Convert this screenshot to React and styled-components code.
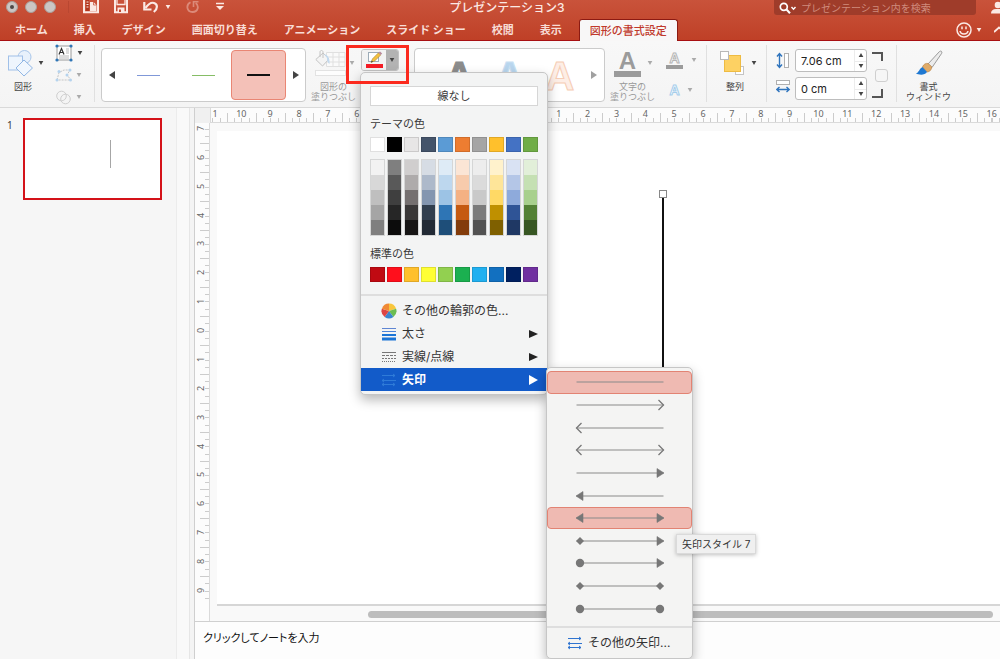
import React from "react";
import styled, { createGlobalStyle, css } from "styled-components";

const sans = `Inter, "Noto Sans CJK JP", sans-serif`;

const GlobalStyle = createGlobalStyle`
  *, *::before, *::after { box-sizing: border-box; }
  body { margin: 0; font-family: ${sans}; font-size: 11px; color: #3a3a3a; }
  button, input { font: inherit; color: inherit; }
  button { border: 0; padding: 0; background: none; cursor: default; }
  ul { list-style: none; margin: 0; padding: 0; }
  svg { display: block; flex: none; }
`;

const App = styled.div`
  display: flex;
  flex-direction: column;
  height: 100vh;
  overflow: hidden;
  background: #fff;
`;

/* ---------- title bar and tabs ---------- */

const Header = styled.header`
  flex: none;
  background: linear-gradient(#c9533b, #bf4027);
  border-bottom: 1px solid #a80f12;
  color: #fbe9e4;
`;

const TitleBar = styled.div`
  display: grid;
  grid-template-columns: 1fr auto 1fr;
  align-items: start;
  height: 15px;
  padding-left: 14px;
`;

const TitleLeft = styled.div`
  display: flex;
  align-items: center;
  height: 13px;
  margin-left: -8px;
`;

const Lights = styled.div`
  display: flex;
  gap: 7px;
  padding-right: 12px;
  margin-right: 14px;
  border-right: 1px solid #b94731;
`;

const Light = styled.button`
  display: grid;
  place-items: center;
  width: 12px;
  height: 12px;
  border-radius: 50%;
  background: #cbc6c4;
  border: 1px solid #a99f9b;
  &::after {
    content: "";
    width: 4px;
    height: 4px;
    border-radius: 50%;
    background: ${(p) => (p.$dot ? "#4f4a48" : "transparent")};
  }
`;

const QuickTools = styled.div`
  display: flex;
  align-items: center;
  gap: 15px;
`;

const ToolPair = styled.span`
  display: flex;
  align-items: center;
  gap: 6px;
`;

const Title = styled.h1`
  margin: 0;
  font-size: 12px;
  line-height: 15px;
  font-weight: 500;
  white-space: nowrap;
`;

const TitleRight = styled.div`
  display: flex;
  justify-content: flex-end;
  gap: 15px;
`;

const Search = styled.label`
  display: flex;
  align-items: center;
  gap: 4px;
  width: 202px;
  height: 15px;
  padding: 0 5px;
  border-radius: 0 0 3px 3px;
  background: #9f3c2a;
`;

const SearchInput = styled.input`
  flex: 1;
  min-width: 0;
  height: 14px;
  padding: 0;
  border: 0;
  outline: 0;
  background: none;
  font-size: 10px;
  &::placeholder { color: #cf8b7d; opacity: 1; }
`;

const TabBar = styled.nav`
  display: flex;
  align-items: stretch;
  height: 21px;
  margin-top: 4px;
  padding-left: 2px;
`;

const Tab = styled.button`
  padding: 0 13px;
  font-size: 11px;
  line-height: 20px;
  font-weight: 700;
  color: #f8ddd6;
  white-space: nowrap;
  ${(p) =>
    p.$active &&
    css`
      margin: 0 0 -1px 4px;
      padding: 0 10px;
      border: 1px solid #8c1a12;
      border-bottom: 0;
      border-radius: 3px 3px 0 0;
      background: #f8f7f7;
      color: #c0392b;
      font-weight: 500;
    `}
`;

const TabTools = styled.div`
  display: flex;
  align-items: center;
  gap: 4px;
  margin-left: auto;
`;

/* ---------- ribbon ---------- */

const Ribbon = styled.section`
  position: relative;
  z-index: 2;
  flex: none;
  display: flex;
  gap: 6px;
  height: 67px;
  padding: 7px 0 5px 8px;
  background: linear-gradient(#f8f8f8, #f4f4f4);
  border-bottom: 1px solid #d9d9d9;
`;

const Divider = styled.span`
  flex: none;
  width: 1px;
  margin: -3px 0 0;
  background: #e0e0e0;
`;

const BigTool = styled.button`
  flex: none;
  display: flex;
  flex-direction: column;
  align-items: ${(p) => (p.$center ? "center" : "flex-start")};
  width: ${(p) => p.$w}px;
  padding-left: ${(p) => p.$pad || 0}px;
`;

const IconRow = styled.span`
  display: flex;
  align-items: center;
  gap: 3px;
  height: 30px;
  padding-left: ${(p) => p.$pad || 0}px;
`;

const ToolLabel = styled.span`
  display: flex;
  flex-direction: column;
  align-items: center;
  width: ${(p) => p.$w}px;
  padding-top: 4px;
  font-size: 9px;
  line-height: 10px;
  white-space: nowrap;
  color: ${(p) => (p.$dim ? "#999" : "#444")};
`;

const ToolColumn = styled.div`
  flex: none;
  display: flex;
  flex-direction: column;
  justify-content: ${(p) => (p.$spread ? "flex-start" : "space-between")};
  gap: ${(p) => (p.$spread ? 5 : 0)}px;
  width: ${(p) => p.$w}px;
  padding-left: ${(p) => p.$pad || 0}px;
  margin: -4px 0;
`;

const SmallTool = styled.button`
  display: flex;
  align-items: center;
  gap: 4px;
  height: ${(p) => p.$h || 18}px;
`;

const Gallery = styled.div`
  flex: none;
  display: flex;
  width: ${(p) => p.$w}px;
  height: 54px;
  border: 1px solid #cbcbcb;
  border-radius: 4px;
  background: #fff;
`;

const GalleryArrow = styled.button`
  display: grid;
  place-items: center;
  width: 19px;
`;

const GalleryCell = styled.button`
  flex: 1;
  display: grid;
  place-items: center;
  border-radius: 4px;
  border: 1px solid ${(p) => (p.$active ? "#e98674" : "transparent")};
  background: ${(p) => (p.$active ? "#f4c1b8" : "none")};
  margin: 1px 0;
`;

const Stroke = styled.span`
  width: 23px;
  border-top: ${(p) => (p.$bold ? 2 : 1)}px solid ${(p) => p.$color};
`;

const ArtLetter = styled.span`
  font: bold 40px/50px "Liberation Sans", sans-serif;
  color: ${(p) => p.$fill};
  -webkit-text-stroke: 1px ${(p) => p.$line};
`;

const TextGlyph = styled.span`
  display: flex;
  flex-direction: column;
  align-items: center;
  width: ${(p) => p.$w}px;
  font: bold ${(p) => p.$size}px/${(p) => p.$lh}px "Liberation Sans", sans-serif;
  color: ${(p) => p.$fill};
  -webkit-text-stroke: ${(p) => (p.$line ? "1px" : "0")} ${(p) => p.$line};
  &::after {
    content: "";
    width: 100%;
    height: ${(p) => p.$bar || 0}px;
    background: #9b9b9b;
  }
`;

const OutlineTool = styled.div`
  position: relative;
  flex: none;
  width: 47px;
`;

const SplitButton = styled.div`
  display: flex;
  width: 38px;
  height: 22px;
  margin-top: 1px;
  border: 1px solid #c2c2c2;
  border-radius: 3px;
  overflow: hidden;
`;

const SplitMain = styled.button`
  flex: 1;
  display: grid;
  place-items: center;
  background: #f3f3f3;
`;

const SplitCaret = styled.button`
  display: grid;
  place-items: center;
  width: 12px;
  background: #b3b3b3;
`;

const Callout = styled.div`
  position: absolute;
  z-index: 5;
  left: -15px;
  top: -3px;
  width: 63px;
  height: 39px;
  border: 3px solid #fb2a1e;
  pointer-events: none;
`;

const SizeGroup = styled.div`
  flex: none;
  display: grid;
  grid-template-columns: 14px 72px 16px;
  column-gap: 5px;
  width: 117px;
  padding-left: 3px;
`;

const SizeFields = styled.div`
  display: flex;
  flex-direction: column;
  gap: 5px;
  padding-top: 1px;
`;

const SizeIcons = styled.div`
  display: grid;
  grid-template-rows: 24px 30px;
  align-items: center;
`;

const NumberBox = styled.div`
  display: flex;
  height: 23px;
  border: 1px solid #bdbdbd;
  border-radius: 3px;
  background: #fff;
`;

const NumberInput = styled.input`
  flex: 1;
  min-width: 0;
  padding: 0 0 0 5px;
  border: 0;
  outline: 0;
  background: none;
  font-size: 11px;
  color: #222;
`;

const Stepper = styled.div`
  display: grid;
  grid-template-rows: 1fr 1fr;
  width: 12px;
  border-left: 1px solid #ececec;
`;

const StepButton = styled.button`
  display: grid;
  place-items: center;
  & + & { border-top: 1px solid #ececec; }
`;

const AspectLock = styled.div`
  display: flex;
  flex-direction: column;
  align-items: flex-start;
  justify-content: space-between;
  height: 46px;
  margin-top: 4px;
`;

const LockBox = styled.input`
  appearance: none;
  align-self: flex-end;
  width: 13px;
  height: 13px;
  margin: 0;
  border: 1px solid #cfcfcf;
  border-radius: 3px;
  background: #f6f6f6;
`;

/* ---------- outline menu ---------- */

const Menu = styled.div`
  position: absolute;
  z-index: 3;
  left: -1px;
  top: 24px;
  width: 188px;
  padding-bottom: 3px;
  border: 1px solid #c6c6c6;
  border-radius: 5px;
  background: #f3f4f4;
  box-shadow: 0 5px 12px rgba(0, 0, 0, 0.28);
`;

const Palette = styled.div`
  display: flex;
  flex-direction: column;
  padding: 13px 9px 12px;
  border-bottom: 2px solid #dedede;
`;

const NoLine = styled.button`
  height: 20px;
  border: 1px solid #d6d6d6;
  background: #fff;
  line-height: 17px;
`;

const PaletteTitle = styled.h2`
  margin: 0;
  padding: 10px 0 5px;
  font-size: 11px;
  line-height: 16px;
  font-weight: 400;
`;

const SwatchRow = styled.div`
  display: flex;
  gap: 2px;
`;

const Swatch = styled.button`
  width: 15px;
  height: 15px;
  border: 1px solid rgba(0, 0, 0, 0.12);
  background: ${(p) => p.$color};
`;

const Ramp = styled.div`
  display: flex;
  flex-direction: column;
  width: 15px;
  margin-top: 7px;
  border: 1px solid rgba(0, 0, 0, 0.12);
`;

const Shade = styled.button`
  height: 15px;
  background: ${(p) => p.$color};
`;

const MenuList = styled.ul`
  padding-top: 3px;
`;

const MenuItem = styled.li`
  position: relative;
  background: ${(p) => (p.$active ? "#125bc9" : "none")};
  color: ${(p) => (p.$active ? "#fff" : "#333")};
`;

const MenuButton = styled.button`
  display: flex;
  align-items: center;
  gap: 5px;
  width: 100%;
  height: ${(p) => p.$h || 23}px;
  padding: 0 9px 0 20px;
  font-size: 12px;
  font-weight: ${(p) => (p.$strong ? 700 : 400)};
  white-space: nowrap;
`;

const MenuText = styled.span`
  flex: 1;
  text-align: left;
  line-height: 18px;
`;

const SubMenu = styled.div`
  position: absolute;
  left: calc(100% - 1px);
  top: -1px;
  width: 147px;
  padding-top: 3px;
  border: 1px solid #c6c6c6;
  border-radius: 5px;
  background: #f4f4f3;
  color: #333;
  box-shadow: 0 5px 12px rgba(0, 0, 0, 0.28);
`;

const ArrowList = styled.ul`
  display: flex;
  flex-direction: column;
  height: 249px;
  margin-bottom: 6px;
`;

const ArrowItem = styled.li`
  position: relative;
  flex: 1;
  display: flex;
`;

const ArrowButton = styled.button`
  flex: 1;
  display: grid;
  place-items: center;
  border: 1px solid ${(p) => (p.$active ? "#e28373" : "transparent")};
  border-radius: 4px;
  background: ${(p) => (p.$active ? "#efbab2" : "none")};
`;

const SubFooter = styled.div`
  border-top: 2px solid #dedede;
`;

const Tooltip = styled.span`
  position: absolute;
  left: 129px;
  top: 27px;
  padding: 0 5px;
  border: 1px solid #dadada;
  background: #f0f0f0;
  box-shadow: 0 1px 4px rgba(0, 0, 0, 0.25);
  font-size: 10px;
  line-height: 18px;
  white-space: nowrap;
`;

/* ---------- work area ---------- */

const Work = styled.div`
  flex: 1;
  min-height: 0;
  display: flex;
`;

const Sidebar = styled.aside`
  flex: none;
  display: flex;
  align-items: flex-start;
  gap: 10px;
  width: 176px;
  padding: 10px 7px;
  background: #f6f6f6;
`;

const SlideNumber = styled.span`
  width: 6px;
  font: 10px/14px "Noto Sans", sans-serif;
`;

const Thumb = styled.button`
  position: relative;
  width: 139px;
  height: 82px;
  border: 2px solid #d41219;
  background: #fff;
`;

const ThumbLine = styled.span`
  position: absolute;
  left: 85px;
  top: 20px;
  height: 28px;
  border-left: 1px solid #a6a6a6;
`;

const Gutter = styled.div`
  flex: none;
  width: 19px;
  background: #f9f9f9;
  border-left: 1px solid #ececec;
  border-right: 1px solid #cfcfcf;
  box-shadow: inset -4px 0 0 #f4f4f4, inset -5px 0 0 #e6e6e6;
`;

const Main = styled.main`
  flex: 1;
  min-width: 0;
  display: flex;
  flex-direction: column;
`;

const Stage = styled.div`
  flex: 1;
  min-height: 0;
  display: grid;
  grid-template: 15px 1fr / 15px 1fr;
`;

const Corner = styled.div`
  background: #f0f0f0;
`;

const RulerX = styled.div`
  display: flex;
  min-width: 0;
  overflow: hidden;
  background: #fcfcfc;
  border-bottom: 1px solid #dadada;
  border-left: 1px solid #dadada;
`;

const TrackX = styled.div`
  flex: 1;
  display: flex;
  margin: 0 -6px 0 -13px;
`;

const MarkX = styled.span`
  flex: 1;
  text-align: center;
  font: 9px/11px "Noto Sans", sans-serif;
  color: #666;
  background:
    linear-gradient(#ccc, #ccc) left bottom / 1px 9px no-repeat,
    repeating-linear-gradient(to right, #ccc 0 1px, transparent 1px 25%) left bottom / 100% 4px no-repeat;
`;

const RulerY = styled.div`
  display: flex;
  min-height: 0;
  overflow: hidden;
  background: #fcfcfc;
  border-right: 1px solid #dadada;
`;

const TrackY = styled.div`
  flex: 1;
  display: flex;
  flex-direction: column;
  margin: -9px 0 16px;
`;

const MarkY = styled.span`
  flex: 1;
  display: flex;
  align-items: center;
  font: 9px/11px "Noto Sans", sans-serif;
  color: #666;
  background:
    linear-gradient(#ccc, #ccc) right top / 9px 1px no-repeat,
    repeating-linear-gradient(to bottom, #ccc 0 1px, transparent 1px 25%) right top / 4px 100% no-repeat;
  & > span { transform: rotate(-90deg); width: 11px; text-align: center; }
`;

const Desk = styled.div`
  min-width: 0;
  display: flex;
  flex-direction: column;
  padding: 8px 0 0 7px;
  background: #f9f9f9;
`;

const Slide = styled.div`
  position: relative;
  flex: 1;
  background: #fff;
  border-bottom: 2px solid #d6d6d6;
`;

const DrawnLine = styled.span`
  position: absolute;
  left: 445px;
  top: 63px;
  height: 204px;
  border-left: 2px solid #111;
`;

const Handle = styled.span`
  position: absolute;
  left: 442px;
  top: 59px;
  width: 8px;
  height: 8px;
  border: 1px solid #888;
  background: #fff;
`;

const ScrollTrack = styled.div`
  height: 15px;
  padding: 5px 7px 0 151px;
`;

const ScrollThumb = styled.div`
  height: 7px;
  border-radius: 4px;
  background: #bdbdbd;
`;

const Notes = styled.div`
  flex: none;
  height: 38px;
  padding: 8px;
  border-top: 1px solid #d0d0d0;
  background: #fdfdfd;
  font-size: 11px;
  line-height: 16px;
  font-feature-settings: "palt";
  color: #111;
`;

/* ---------- drawings ---------- */

const Caret = ({ color = "#444", up }) => (
  <svg width="6" height="4" viewBox="0 0 6 4" aria-hidden="true">
    <path d={up ? "M0.7 4h4.6L3 0z" : "M0.7 0h4.6L3 4z"} fill={color} />
  </svg>
);

const Triangle = ({ left, color = "#222", w = 6, h = 8 }) => (
  <svg width={w} height={h} viewBox="0 0 6 8" preserveAspectRatio="none" aria-hidden="true">
    <path d={left ? "M6 0v8L0 4z" : "M0 0v8l6-4z"} fill={color} />
  </svg>
);

const PanelIcon = () => (
  <svg width="16" height="14" viewBox="0 0 16 14">
    <path d="M1 0v12.2h14V0" fill="none" stroke="#fbe9e4" strokeWidth="2" />
    <rect x="3" y="0" width="3" height="11" fill="#b0371f" />
    <path d="M3.500 2h2M3.500 4.500h2M3.500 7h2" stroke="#fbe9e4" strokeWidth="1" />
    <path d="M7 2h3.500l3 3V11H7z" fill="#fbe9e4" />
    <path d="M10.500 2v3h3" fill="none" stroke="#c54b33" strokeWidth=".7" />
  </svg>
);

const SaveIcon = () => (
  <svg width="14" height="14" viewBox="0 0 14 14">
    <path d="M1 0v12.200h12V0" fill="none" stroke="#fbe9e4" strokeWidth="2" />
    <path d="M3 0v4.500h8V0" fill="none" stroke="#fbe9e4" strokeWidth="1.300" />
    <path d="M3.500 7.500h7V12h-7z" fill="#fbe9e4" />
    <path d="M5 9.500h2V12H5z" fill="#c54b33" />
  </svg>
);

const UndoIcon = () => (
  <svg width="16" height="13" viewBox="0 0 16 13">
    <path d="M1.300 2v7.500H8.500" fill="none" stroke="#fbe9e4" strokeWidth="2.200" />
    <path d="M2.500 8C5 4.500 8 2 11 3c3.800 1.300 4 5.500-.2 9" fill="none" stroke="#fbe9e4" strokeWidth="2.200" />
  </svg>
);

const RedoIcon = () => (
  <svg width="14" height="13" viewBox="0 0 14 13">
    <path d="M4.500 2.200C-.5 5 .8 12 6.500 12c5.500 0 7-6 3.200-9" fill="none" stroke="#dc8a79" strokeWidth="1.800" />
    <path d="M7.500 7V1.800H12.500" fill="none" stroke="#dc8a79" strokeWidth="1.600" />
  </svg>
);

const MoreIcon = () => (
  <svg width="10" height="9" viewBox="0 0 10 9">
    <path d="M1 1.500h8" stroke="#fbe9e4" strokeWidth="1.500" />
    <path d="M1 4h8L5 8z" fill="#fbe9e4" />
  </svg>
);

const SearchIcon = () => (
  <svg width="18" height="12" viewBox="0 0 18 12">
    <circle cx="4.800" cy="4.800" r="3.500" fill="none" stroke="#fff" strokeWidth="1.700" />
    <path d="M7.500 7.500l3.500 3.700" stroke="#fff" strokeWidth="2" />
    <path d="M12.500 5l2 2.200 2-2.200" fill="none" stroke="#fff" strokeWidth="1.400" />
  </svg>
);

const PersonIcon = () => (
  <svg width="9" height="14" viewBox="0 0 9 14">
    <circle cx="7" cy="4" r="3.300" fill="#fbe9e4" />
    <path d="M0 12.500c0-3 2-4.500 5-4.500h4v4.500z" fill="#fbe9e4" />
  </svg>
);

const SmileIcon = () => (
  <svg width="16" height="16" viewBox="0 0 16 16">
    <circle cx="8" cy="8" r="7" fill="none" stroke="#fbe9e4" strokeWidth="1.500" />
    <path d="M6 4.500v2.800M10 4.500v2.800" stroke="#fbe9e4" strokeWidth="1.500" />
    <path d="M4 9c.6 4 7.400 4 8 0" fill="none" stroke="#fbe9e4" strokeWidth="1.500" />
  </svg>
);

const ChevronIcon = () => (
  <svg width="6" height="8" viewBox="0 0 6 8">
    <path d="M0 6l5-4.500 5 4.500" fill="none" stroke="#fbe9e4" strokeWidth="1.800" />
  </svg>
);

const ShapesIcon = () => (
  <svg width="27" height="28" viewBox="0 0 27 28">
    <circle cx="16.500" cy="8" r="6.500" fill="#e8f1fb" stroke="#a8c6ea" />
    <rect x="0.500" y="7" width="14" height="14" fill="#eef5fd" stroke="#a0c0e8" />
    <path d="M16 11l8.500 8-8.500 8-8-8z" fill="#f1f7fe" stroke="#90b6e4" />
  </svg>
);

const TextBoxIcon = () => (
  <svg width="18" height="18" viewBox="0 0 18 18">
    <rect x="2" y="2" width="14" height="14" fill="#fff" stroke="#9a9a9a" />
    <path d="M4 10.500L6.500 4.500 9 10.500M5 8.500h3" fill="none" stroke="#333" strokeWidth="1.200" />
    <path d="M11 5h3M11 7h3M11 9h3M4 12h10M4 14h10" stroke="#aaa" strokeWidth=".8" />
    <g fill="#2e75b6">
      <circle cx="2" cy="2" r="1.600" />
      <circle cx="16" cy="2" r="1.600" />
      <circle cx="2" cy="16" r="1.600" />
      <circle cx="16" cy="16" r="1.600" />
    </g>
  </svg>
);

const EditPointsIcon = () => (
  <svg width="17" height="14" viewBox="0 0 17 14">
    <path d="M2 12L4 4.500 9 2h6l-3 5 4 5z" fill="none" stroke="#c5c5c5" strokeDasharray="2 1" />
    <g fill="#b5d3ee">
      <circle cx="2" cy="12" r="1.500" />
      <circle cx="4" cy="3.500" r="1.500" />
      <circle cx="15" cy="2" r="1.500" />
      <circle cx="12" cy="7" r="1.500" />
      <circle cx="15.500" cy="12" r="1.500" />
    </g>
  </svg>
);

const MergeIcon = () => (
  <svg width="17" height="15" viewBox="0 0 17 15">
    <circle cx="6.500" cy="6" r="4.800" fill="none" stroke="#cfcfcf" />
    <circle cx="10.500" cy="9" r="4.800" fill="none" stroke="#cfcfcf" />
  </svg>
);

const BucketIcon = () => (
  <svg width="31" height="27" viewBox="0 0 31 27">
    <path d="M11.500 2.500H30v14H11.500zM18 2.500v14M24 2.500v14M11.500 7h18.500M11.500 12h18.500" fill="#fafafa" stroke="#e0e0e0" />
    <path d="M8 3l6 6-6.500 7L0.800 9.500z" fill="#f4f4f4" stroke="#c4c4c4" />
    <path d="M5 7V2c0-2 3-2 3 0v6" fill="none" stroke="#c4c4c4" />
    <path d="M9 4c4 1 6 4 5.500 10-1.500-1-3-4-2.500-6" fill="#c3d9ee" />
    <rect x="0.500" y="20.500" width="30" height="5" fill="#fdfdfd" stroke="#e2e2e2" />
  </svg>
);

const PencilIcon = () => (
  <svg width="20" height="18" viewBox="0 0 20 18">
    <rect x="4.500" y="1.500" width="10" height="9" fill="#fff" stroke="#9dacb8" />
    <path d="M7 11.500l1.500-3.700 6-6 2.200 2.200-6 6z" fill="#f3c13f" stroke="#a8843a" strokeWidth=".6" />
    <path d="M14.500 1.800L16 .5l2.200 2-1.500 1.500z" fill="#b98a9c" />
    <path d="M7 11.500l.8-1.900 1.200 1.100z" fill="#333" />
    <rect x="2" y="13" width="17" height="4" fill="#f51c25" />
  </svg>
);

const AlignIcon = () => (
  <svg width="25" height="25" viewBox="0 0 25 25">
    <rect x="15.500" y="15.500" width="8" height="8" fill="#fff" stroke="#c4c4c4" />
    <rect x="4.500" y="4.500" width="16" height="16" fill="#fdd163" stroke="#eebb42" />
    <rect x="0.500" y="0.500" width="8" height="8" fill="#fff" stroke="#b9b9b9" />
  </svg>
);

const HeightIcon = () => (
  <svg width="14" height="17" viewBox="0 0 14 17">
    <path d="M3.500 2v13M1 4.500L3.500 1.500 6 4.500M1 12.500l2.500 3 2.500-3" fill="none" stroke="#2f74bd" strokeWidth="1.400" />
    <rect x="8.500" y="1.500" width="4" height="14" fill="#fff" stroke="#b0b0b0" />
  </svg>
);

const WidthIcon = () => (
  <svg width="15" height="14" viewBox="0 0 15 14">
    <rect x="0.500" y="0.500" width="13" height="4" fill="#fff" stroke="#b0b0b0" />
    <path d="M1 9.500h12M3.500 7L.8 9.500l2.700 2.500M10.500 7l2.700 2.500-2.700 2.500" fill="none" stroke="#2f74bd" strokeWidth="1.400" />
  </svg>
);

const Bracket = ({ bottom }) => (
  <svg width="11" height="9" viewBox="0 0 11 9">
    <path d={bottom ? "M0 8h10V0" : "M0 1h10v8"} fill="none" stroke="#555" strokeWidth="2" />
  </svg>
);

const BrushIcon = () => (
  <svg width="28" height="26" viewBox="0 0 28 26">
    <path d="M13 14L24.500 1.500c1.500-1.200 3 .2 2.200 1.800L17 17.500z" fill="#ececec" stroke="#9b9b9b" />
    <path d="M7.500 17c1-3 3.500-4 5.700-3.500l3.500 3.300c0 3-2 5-4.700 5.200z" fill="#e0ab68" stroke="#b98346" strokeWidth=".7" />
    <path d="M0.800 23.500c3-.5 3.500-5 6.700-6.500l4.500 5c-2 3.500-8 3-11.200 1.500z" fill="#1f78d1" />
  </svg>
);

const ColorWheel = () => (
  <svg width="16" height="16" viewBox="0 0 16 16">
    <path d="M8 8V.5A7.500 7.500 0 0 1 15.100 5.700z" fill="#f8c63c" />
    <path d="M8 8l7.100-2.300A7.500 7.500 0 0 1 12.400 14z" fill="#6bbd52" />
    <path d="M8 8l4.400 6A7.500 7.500 0 0 1 3.600 14z" fill="#3b86cf" />
    <path d="M8 8l-4.400 6A7.500 7.500 0 0 1 .9 5.700z" fill="#de4444" />
    <path d="M8 8L.9 5.700A7.500 7.500 0 0 1 8 .5z" fill="#f08a35" />
  </svg>
);

const WeightIcon = () => (
  <svg width="16" height="14" viewBox="0 0 16 14">
    <path d="M1 1.500h14" stroke="#5f86d3" />
    <path d="M1 4.500h14" stroke="#4a83d8" />
    <path d="M1 8h14" stroke="#1b75d6" strokeWidth="2" />
    <path d="M1 12h14" stroke="#1b75d6" strokeWidth="3" />
  </svg>
);

const DashIcon = () => (
  <svg width="16" height="12" viewBox="0 0 16 12">
    <g stroke="#777">
      <path d="M1 1.500h14" />
      <path d="M1 4.500h14" strokeDasharray="3 1" />
      <path d="M1 7.500h14" strokeDasharray="2 1" />
      <path d="M1 10.500h14" strokeDasharray="1 1" />
    </g>
  </svg>
);

const ArrowsIcon = ({ color }) => (
  <svg width="16" height="14" viewBox="0 0 16 14">
    <g stroke={color} fill="none">
      <path d="M1 2.500h13M1 7.500h14M1 11.500h13" />
      <path d="M12 1l2 1.500-2 1.500M3 6L1 7.500 3 9M3 10l-2 1.500L3 13M12 10l2 1.500-2 1.500" />
    </g>
  </svg>
);

const End = ({ kind, right }) => {
  const flip = right ? "translate(90 0) scale(-1 1)" : undefined;
  return (
    <g transform={flip}>
      {kind === "open" && <path d="M6.500 2L1.500 7l5 5" fill="none" stroke="#777" strokeWidth="1.300" />}
      {kind === "solid" && <path d="M1 7l7-4.500v9z" fill="#777" stroke="#777" strokeWidth=".6" />}
      {kind === "diamond" && <path d="M5 3l4 4-4 4-4-4z" fill="#777" />}
      {kind === "dot" && <circle cx="5" cy="7" r="4.200" fill="#777" />}
    </g>
  );
};

const ArrowSample = ({ start, end }) => (
  <svg width="90" height="14" viewBox="0 0 90 14">
    <path d="M1.500 7h87" stroke="#8a8a8a" strokeWidth="1.200" />
    <End kind={start} />
    <End kind={end} right />
  </svg>
);

/* ---------- data ---------- */

const tabs = ["ホーム", "挿入", "デザイン", "画面切り替え", "アニメーション", "スライド ショー", "校閲", "表示", "図形の書式設定"];

const themeColors = ["#ffffff", "#000000", "#e7e6e6", "#44546a", "#5b9bd5", "#ed7d31", "#a5a5a5", "#ffc02c", "#4472c4", "#70ad47"];

const ramps = [
  ["#f2f2f2", "#d8d8d8", "#bfbfbf", "#a5a5a5", "#7f7f7f"],
  ["#7f7f7f", "#595959", "#3f3f3f", "#262626", "#0c0c0c"],
  ["#d0cece", "#aeabab", "#757070", "#3a3838", "#171616"],
  ["#d6dce4", "#adb9ca", "#8496b0", "#323f4f", "#222a35"],
  ["#deebf6", "#bdd7ee", "#9cc3e5", "#2e75b5", "#1e4e79"],
  ["#fbe5d5", "#f7cbac", "#f4b183", "#c55a11", "#833c0b"],
  ["#ededed", "#dbdbdb", "#c9c9c9", "#7b7b7b", "#525252"],
  ["#fff2cc", "#fee599", "#ffd965", "#bf9000", "#7f6000"],
  ["#d9e2f3", "#b4c6e7", "#8eaadb", "#2f5496", "#1f3864"],
  ["#e2efd9", "#c5e0b3", "#a8d08d", "#538135", "#375623"],
];

const standardColors = ["#c00a12", "#ff0f1c", "#ffc02c", "#ffff35", "#92d050", "#1bb050", "#20b0f0", "#1270c0", "#002060", "#7030a0"];

const arrowStyles = [
  { start: null, end: null, active: true },
  { start: null, end: "open" },
  { start: "open", end: null },
  { start: "open", end: "open" },
  { start: null, end: "solid" },
  { start: "solid", end: null },
  { start: "solid", end: "solid", active: true, tip: "矢印スタイル 7" },
  { start: "diamond", end: "solid" },
  { start: "dot", end: "solid" },
  { start: "diamond", end: "diamond" },
  { start: "dot", end: "dot" },
];

const range = (from, to) =>
  Array.from({ length: Math.abs(to - from) + 1 }, (_, i) => Math.abs(from + i));

const marksX = range(-11, 16);
const marksY = range(-7, 9);

/* ---------- parts ---------- */

const SizeField = ({ label, value }) => (
  <NumberBox>
    <NumberInput aria-label={label} defaultValue={value} />
    <Stepper>
      <StepButton aria-label={`${label} +`}><Caret up /></StepButton>
      <StepButton aria-label={`${label} -`}><Caret /></StepButton>
    </Stepper>
  </NumberBox>
);

const ArrowMenu = () => (
  <SubMenu>
    <ArrowList>
      {arrowStyles.map((s, i) => (
        <ArrowItem key={i}>
          <ArrowButton $active={s.active} aria-label={`矢印スタイル ${i + 1}`}>
            <ArrowSample start={s.start} end={s.end} />
          </ArrowButton>
          {s.tip && <Tooltip role="tooltip">{s.tip}</Tooltip>}
        </ArrowItem>
      ))}
    </ArrowList>
    <SubFooter>
      <MenuButton $h={30}>
        <ArrowsIcon color="#2f74d0" />
        <MenuText>その他の矢印...</MenuText>
      </MenuButton>
    </SubFooter>
  </SubMenu>
);

const OutlineMenu = () => (
  <Menu>
    <Palette>
      <NoLine>線なし</NoLine>
      <PaletteTitle>テーマの色</PaletteTitle>
      <SwatchRow>
        {themeColors.map((c) => <Swatch key={c} $color={c} aria-label={c} />)}
      </SwatchRow>
      <SwatchRow>
        {ramps.map((ramp, i) => (
          <Ramp key={i}>
            {ramp.map((c) => <Shade key={c} $color={c} aria-label={c} />)}
          </Ramp>
        ))}
      </SwatchRow>
      <PaletteTitle>標準の色</PaletteTitle>
      <SwatchRow>
        {standardColors.map((c) => <Swatch key={c} $color={c} aria-label={c} />)}
      </SwatchRow>
    </Palette>
    <MenuList>
      <MenuItem>
        <MenuButton><ColorWheel /><MenuText>その他の輪郭の色...</MenuText></MenuButton>
      </MenuItem>
      <MenuItem>
        <MenuButton><WeightIcon /><MenuText>太さ</MenuText><Triangle w={9} h={8} /></MenuButton>
      </MenuItem>
      <MenuItem>
        <MenuButton><DashIcon /><MenuText>実線/点線</MenuText><Triangle w={9} h={8} /></MenuButton>
      </MenuItem>
      <MenuItem $active>
        <MenuButton $strong><ArrowsIcon color="#2f7bd8" /><MenuText>矢印</MenuText><Triangle w={9} h={10} color="#fff" /></MenuButton>
        <ArrowMenu />
      </MenuItem>
    </MenuList>
  </Menu>
);

export default function PresentationWindow() {
  return (
    <App>
      <GlobalStyle />
      <Header>
        <TitleBar>
          <TitleLeft>
            <Lights>
              <Light $dot aria-label="閉じる" />
              <Light aria-label="しまう" />
              <Light aria-label="拡大" />
            </Lights>
            <QuickTools>
              <button aria-label="表示"><PanelIcon /></button>
              <button aria-label="保存"><SaveIcon /></button>
              <ToolPair>
                <button aria-label="元に戻す"><UndoIcon /></button>
                <Caret color="#fbe9e4" />
              </ToolPair>
              <button aria-label="やり直し"><RedoIcon /></button>
              <button aria-label="カスタマイズ"><MoreIcon /></button>
            </QuickTools>
          </TitleLeft>
          <Title>プレゼンテーション3</Title>
          <TitleRight>
            <Search>
              <SearchIcon />
              <SearchInput aria-label="検索" placeholder="プレゼンテーション内を検索" />
            </Search>
            <button aria-label="共有"><PersonIcon /></button>
          </TitleRight>
        </TitleBar>
        <TabBar>
          {tabs.map((t, i) => (
            <Tab key={t} $active={i === tabs.length - 1}>{t}</Tab>
          ))}
          <TabTools>
            <button aria-label="フィードバック"><SmileIcon /></button>
            <Caret color="#fbe9e4" />
            <span />
            <span />
            <button aria-label="リボンを隠す"><ChevronIcon /></button>
          </TabTools>
        </TabBar>
      </Header>

      <Ribbon>
        <BigTool $w={41}>
          <IconRow><ShapesIcon /><Caret /></IconRow>
          <ToolLabel $w={30}>図形</ToolLabel>
        </BigTool>
        <ToolColumn $w={33}>
          <SmallTool aria-label="テキスト ボックス"><TextBoxIcon /><Caret /></SmallTool>
          <SmallTool aria-label="頂点の編集"><EditPointsIcon /><Caret color="#aaa" /></SmallTool>
          <SmallTool aria-label="図形の結合"><MergeIcon /><Caret color="#aaa" /></SmallTool>
        </ToolColumn>
        <Divider />
        <Gallery $w={205}>
          <GalleryArrow aria-label="前へ"><Triangle left color="#444" /></GalleryArrow>
          <GalleryCell aria-label="青の線"><Stroke $color="#8098d8" /></GalleryCell>
          <GalleryCell aria-label="緑の線"><Stroke $color="#86bd66" /></GalleryCell>
          <GalleryCell $active aria-label="黒の線"><Stroke $bold $color="#111" /></GalleryCell>
          <GalleryArrow aria-label="次へ"><Triangle color="#444" /></GalleryArrow>
        </Gallery>
        <BigTool $w={43}>
          <IconRow $pad={3}><BucketIcon /><Caret color="#aaa" /></IconRow>
          <ToolLabel $w={43} $dim><span>図形の</span><span>塗りつぶし</span></ToolLabel>
        </BigTool>
        <OutlineTool>
          <SplitButton>
            <SplitMain aria-label="図形の枠線"><PencilIcon /></SplitMain>
            <SplitCaret aria-label="図形の枠線の色"><Caret /></SplitCaret>
          </SplitButton>
          <OutlineMenu />
          <Callout />
        </OutlineTool>
        <Gallery $w={191}>
          <GalleryArrow aria-label="前へ" />
          <GalleryCell><ArtLetter $fill="#8c8c8c" $line="#8c8c8c">A</ArtLetter></GalleryCell>
          <GalleryCell><ArtLetter $fill="#b9d6ee" $line="#c9e0f3">A</ArtLetter></GalleryCell>
          <GalleryCell><ArtLetter $fill="#fdeee6" $line="#f6cdb5">A</ArtLetter></GalleryCell>
          <GalleryArrow aria-label="次へ"><Triangle color="#a0a0a0" /></GalleryArrow>
        </Gallery>
        <BigTool $w={43}>
          <IconRow $pad={3}>
            <TextGlyph $w={27} $size={24} $lh={21} $bar={6} $fill="#9b9b9b">A</TextGlyph>
            <span />
            <Caret color="#aaa" />
          </IconRow>
          <ToolLabel $w={43} $dim><span>文字の</span><span>塗りつぶし</span></ToolLabel>
        </BigTool>
        <ToolColumn $w={40} $pad={6} $spread>
          <SmallTool $h={32}>
            <TextGlyph $w={17} $size={14} $lh={13} $bar={4} $fill="#fff" $line="#b5b5b5">A</TextGlyph>
            <span />
            <Caret color="#aaa" />
          </SmallTool>
          <SmallTool>
            <TextGlyph $w={17} $size={14} $lh={14} $fill="#fff" $line="#a5cdeb">A</TextGlyph>
            <Caret color="#aaa" />
          </SmallTool>
        </ToolColumn>
        <Divider />
        <BigTool $w={47} $pad={7}>
          <IconRow><AlignIcon /><span /><Caret /></IconRow>
          <ToolLabel $w={30}>整列</ToolLabel>
        </BigTool>
        <Divider />
        <SizeGroup>
          <SizeIcons><HeightIcon /><WidthIcon /></SizeIcons>
          <SizeFields>
            <SizeField label="高さ" value="7.06 cm" />
            <SizeField label="幅" value="0 cm" />
          </SizeFields>
          <AspectLock>
            <Bracket />
            <LockBox type="checkbox" aria-label="縦横比を固定する" />
            <Bracket bottom />
          </AspectLock>
        </SizeGroup>
        <Divider />
        <BigTool $w={51} $center>
          <IconRow><BrushIcon /></IconRow>
          <ToolLabel $w={51}><span>書式</span><span>ウィンドウ</span></ToolLabel>
        </BigTool>
      </Ribbon>

      <Work>
        <Sidebar>
          <SlideNumber>1</SlideNumber>
          <Thumb aria-label="スライド 1"><ThumbLine /></Thumb>
        </Sidebar>
        <Gutter />
        <Main>
          <Stage>
            <Corner />
            <RulerX>
              <TrackX>{marksX.map((n, i) => <MarkX key={i}>{n}</MarkX>)}</TrackX>
            </RulerX>
            <RulerY>
              <TrackY>{marksY.map((n, i) => <MarkY key={i}><span>{n}</span></MarkY>)}</TrackY>
            </RulerY>
            <Desk>
              <Slide>
                <DrawnLine />
                <Handle />
              </Slide>
              <ScrollTrack><ScrollThumb /></ScrollTrack>
            </Desk>
          </Stage>
          <Notes>クリックしてノートを入力</Notes>
        </Main>
      </Work>
    </App>
  );
}
